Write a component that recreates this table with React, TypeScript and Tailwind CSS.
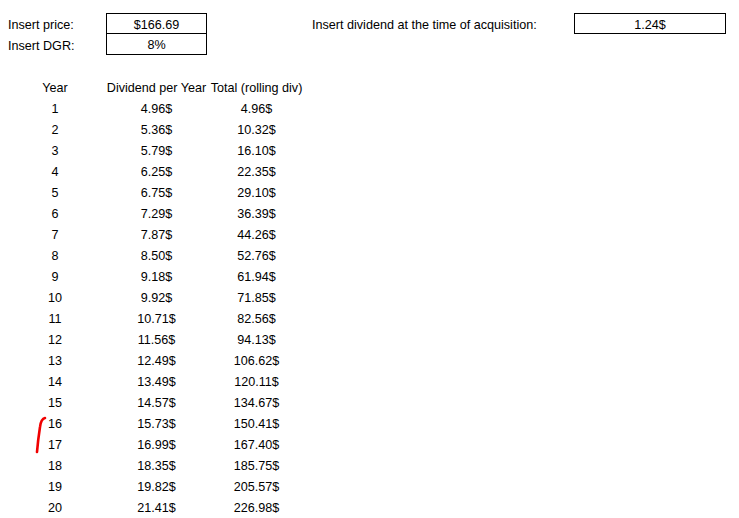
const rows: [number, string, string][] = [
  [1, '4.96$', '4.96$'],
  [2, '5.36$', '10.32$'],
  [3, '5.79$', '16.10$'],
  [4, '6.25$', '22.35$'],
  [5, '6.75$', '29.10$'],
  [6, '7.29$', '36.39$'],
  [7, '7.87$', '44.26$'],
  [8, '8.50$', '52.76$'],
  [9, '9.18$', '61.94$'],
  [10, '9.92$', '71.85$'],
  [11, '10.71$', '82.56$'],
  [12, '11.56$', '94.13$'],
  [13, '12.49$', '106.62$'],
  [14, '13.49$', '120.11$'],
  [15, '14.57$', '134.67$'],
  [16, '15.73$', '150.41$'],
  [17, '16.99$', '167.40$'],
  [18, '18.35$', '185.75$'],
  [19, '19.82$', '205.57$'],
  [20, '21.41$', '226.98$'],
]

function TableRow({ a, b, c }: { a: string | number; b: string; c: string }) {
  return (
    <div className="flex h-[21px] items-center">
      <div className="w-[106px] pl-[4px] pt-[4px] text-center">{a}</div>
      <div className="w-[101px] pt-[4px] text-center whitespace-nowrap">{b}</div>
      <div className="w-[99px] pt-[4px] text-center whitespace-nowrap">{c}</div>
    </div>
  )
}

export default function App() {
  return (
    <div
      className="relative w-[739px] h-[518px] bg-white text-black text-[12.6px] leading-none pt-[13px] overflow-hidden"
      style={{ fontFamily: '"Liberation Sans", Arial, sans-serif' }}
    >
      {/* inputs */}
      <div className="flex h-[21px] items-center">
        <div className="w-[106px] pl-[8px] pt-[4px] whitespace-nowrap">Insert price:</div>
        <div className="w-[101px] h-[21px] pt-[3px] border border-black flex items-center justify-center">$166.69</div>
        <div className="w-[105px]" />
        <div className="w-[262px] pt-[4px] whitespace-nowrap">Insert dividend at the time of acquisition:</div>
        <div className="w-[152px] h-[21px] pt-[3px] border border-black flex items-center justify-center">1.24$</div>
      </div>
      <div className="flex h-[21px] items-center">
        <div className="w-[106px] pl-[8px] pt-[4px] whitespace-nowrap">Insert DGR:</div>
        <div className="w-[101px] h-[21px] pt-[3px] border-x border-b border-black flex items-center justify-center">8%</div>
      </div>

      <div className="h-[21px]" />

      <TableRow a="Year" b="Dividend per Year" c="Total (rolling div)" />
      {rows.map(([y, d, t]) => (
        <TableRow key={y} a={y} b={d} c={t} />
      ))}

      {/* red pen mark */}
      <svg className="absolute left-0 top-0 pointer-events-none" width="739" height="518">
        <path
          d="M45 418 Q41 419 40 427 Q38 440 37 452"
          fill="none"
          stroke="#f00000"
          strokeWidth="2.6"
          strokeLinecap="round"
        />
      </svg>
    </div>
  )
}
